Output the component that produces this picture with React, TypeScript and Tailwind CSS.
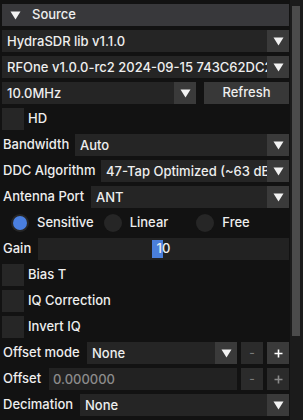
import React from "react"

function Arrow() {
  return (
    <svg width="11" height="9" viewBox="0 0 11 9" className="block">
      <polygon points="0.5,0.5 10.5,0.5 5.5,8.5" fill="#f2f2f2" />
    </svg>
  )
}

function Combo({ value, className = "" }: { value: string; className?: string }) {
  return (
    <div className={`flex min-w-0 h-[22px] bg-[#252525] ${className}`}>
      <div className="flex-1 min-w-0 overflow-hidden whitespace-nowrap pl-[5px] leading-[22px]">{value}</div>
      <div className="w-[22px] shrink-0 bg-[#3a3a3a] flex items-center justify-center">
        <Arrow />
      </div>
    </div>
  )
}

function LabeledCombo({ label, width, value }: { label: string; width: string; value: string }) {
  return (
    <div className="flex h-[22px] items-center">
      <span className={`${width} shrink-0 pl-[1px] whitespace-nowrap`}>{label}</span>
      <Combo value={value} className="flex-1" />
    </div>
  )
}

function Checkbox({ label }: { label: string }) {
  return (
    <div className="flex h-[22px] items-center gap-[4px]">
      <div className="w-[22px] h-[22px] bg-[#262626]" />
      <span>{label}</span>
    </div>
  )
}

function Radio({ label, active }: { label: string; active?: boolean }) {
  return (
    <div className="w-[96px] flex items-center gap-2">
      <div className="w-[18px] h-[18px] rounded-full bg-[#262626] flex items-center justify-center">
        {active && <div className="w-[14px] h-[14px] rounded-full bg-[#4a7fe0]" />}
      </div>
      <span>{label}</span>
    </div>
  )
}

function StepButtons({ dim }: { dim?: boolean }) {
  return (
    <>
      <div className="w-[22px] h-[22px] shrink-0 bg-[#2b2b2b] flex items-center justify-center text-[#7a7a7a] text-[12px]">-</div>
      <div className={`w-[22px] h-[22px] shrink-0 flex items-center justify-center ${dim ? "bg-[#2b2b2b] text-[#8a8a8a]" : "bg-[#3a3a3a] text-white"}`}>
        <svg width="9" height="9" viewBox="0 0 9 9">
          <path d="M4.5 0.5V8.5M0.5 4.5H8.5" stroke="currentColor" strokeWidth="1.6" />
        </svg>
      </div>
    </>
  )
}

export default function App() {
  return (
    <div className="w-[303px] h-[420px] overflow-hidden bg-[#121212] flex font-['Inter',sans-serif] font-medium text-[13px] text-[#eeeeee]">
      <div className="w-[290px] shrink-0 flex flex-col gap-1 pt-1 pl-[2px] pr-[1px]">
        <div className="h-[22px] bg-[#38383b] flex items-center gap-[11px] pl-[8px]">
          <Arrow />
          <span>Source</span>
        </div>

        <Combo value="HydraSDR lib v1.1.0" />
        <Combo value="RFOne v1.0.0-rc2 2024-09-15 743C62DC2E3B" />

        <div className="flex h-[22px] gap-2">
          <Combo value="10.0MHz" className="w-[194px]" />
          <div className="flex-1 bg-[#383838] flex items-center justify-center">Refresh</div>
        </div>

        <Checkbox label="HD" />
        <LabeledCombo label="Bandwidth" width="w-[73px]" value="Auto" />
        <LabeledCombo label="DDC Algorithm" width="w-[99px]" value="47-Tap Optimized (~63 dB stopband)" />
        <LabeledCombo label="Antenna Port" width="w-[89px]" value="ANT" />

        <div className="flex h-[22px] items-center pl-[9px]">
          <Radio label="Sensitive" active />
          <Radio label="Linear" />
          <Radio label="Free" />
        </div>

        <div className="flex h-[22px] items-center">
          <span className="w-[36px] shrink-0 pl-[1px]">Gain</span>
          <div className="relative flex-1 h-[22px] bg-[#222222] flex items-center justify-center">
            <div className="absolute left-[114px] top-[2px] w-[11px] h-[18px] bg-[#4a7fdb]" />
            <span className="relative">10</span>
          </div>
        </div>

        <Checkbox label="Bias T" />
        <Checkbox label="IQ Correction" />
        <Checkbox label="Invert IQ" />

        <div className="flex h-[22px] items-center gap-1">
          <span className="w-[81px] shrink-0 pl-[1px] whitespace-nowrap">Offset mode</span>
          <Combo value="None" className="flex-1" />
          <StepButtons />
        </div>

        <div className="flex h-[22px] items-center gap-1">
          <span className="w-[43px] shrink-0 pl-[1px]">Offset</span>
          <div className="flex-1 h-[22px] bg-[#222222] pl-[4px] leading-[22px] text-[#8c8c8c]">0.000000</div>
          <StepButtons dim />
        </div>

        <LabeledCombo label="Decimation" width="w-[78px]" value="None" />
      </div>

      <div className="w-[13px] h-full bg-[#1b1b1b] pl-[2px] pt-[6px]">
        <div className="w-[8px] h-[330px] bg-[#4b4b4b]" />
      </div>
    </div>
  )
}
